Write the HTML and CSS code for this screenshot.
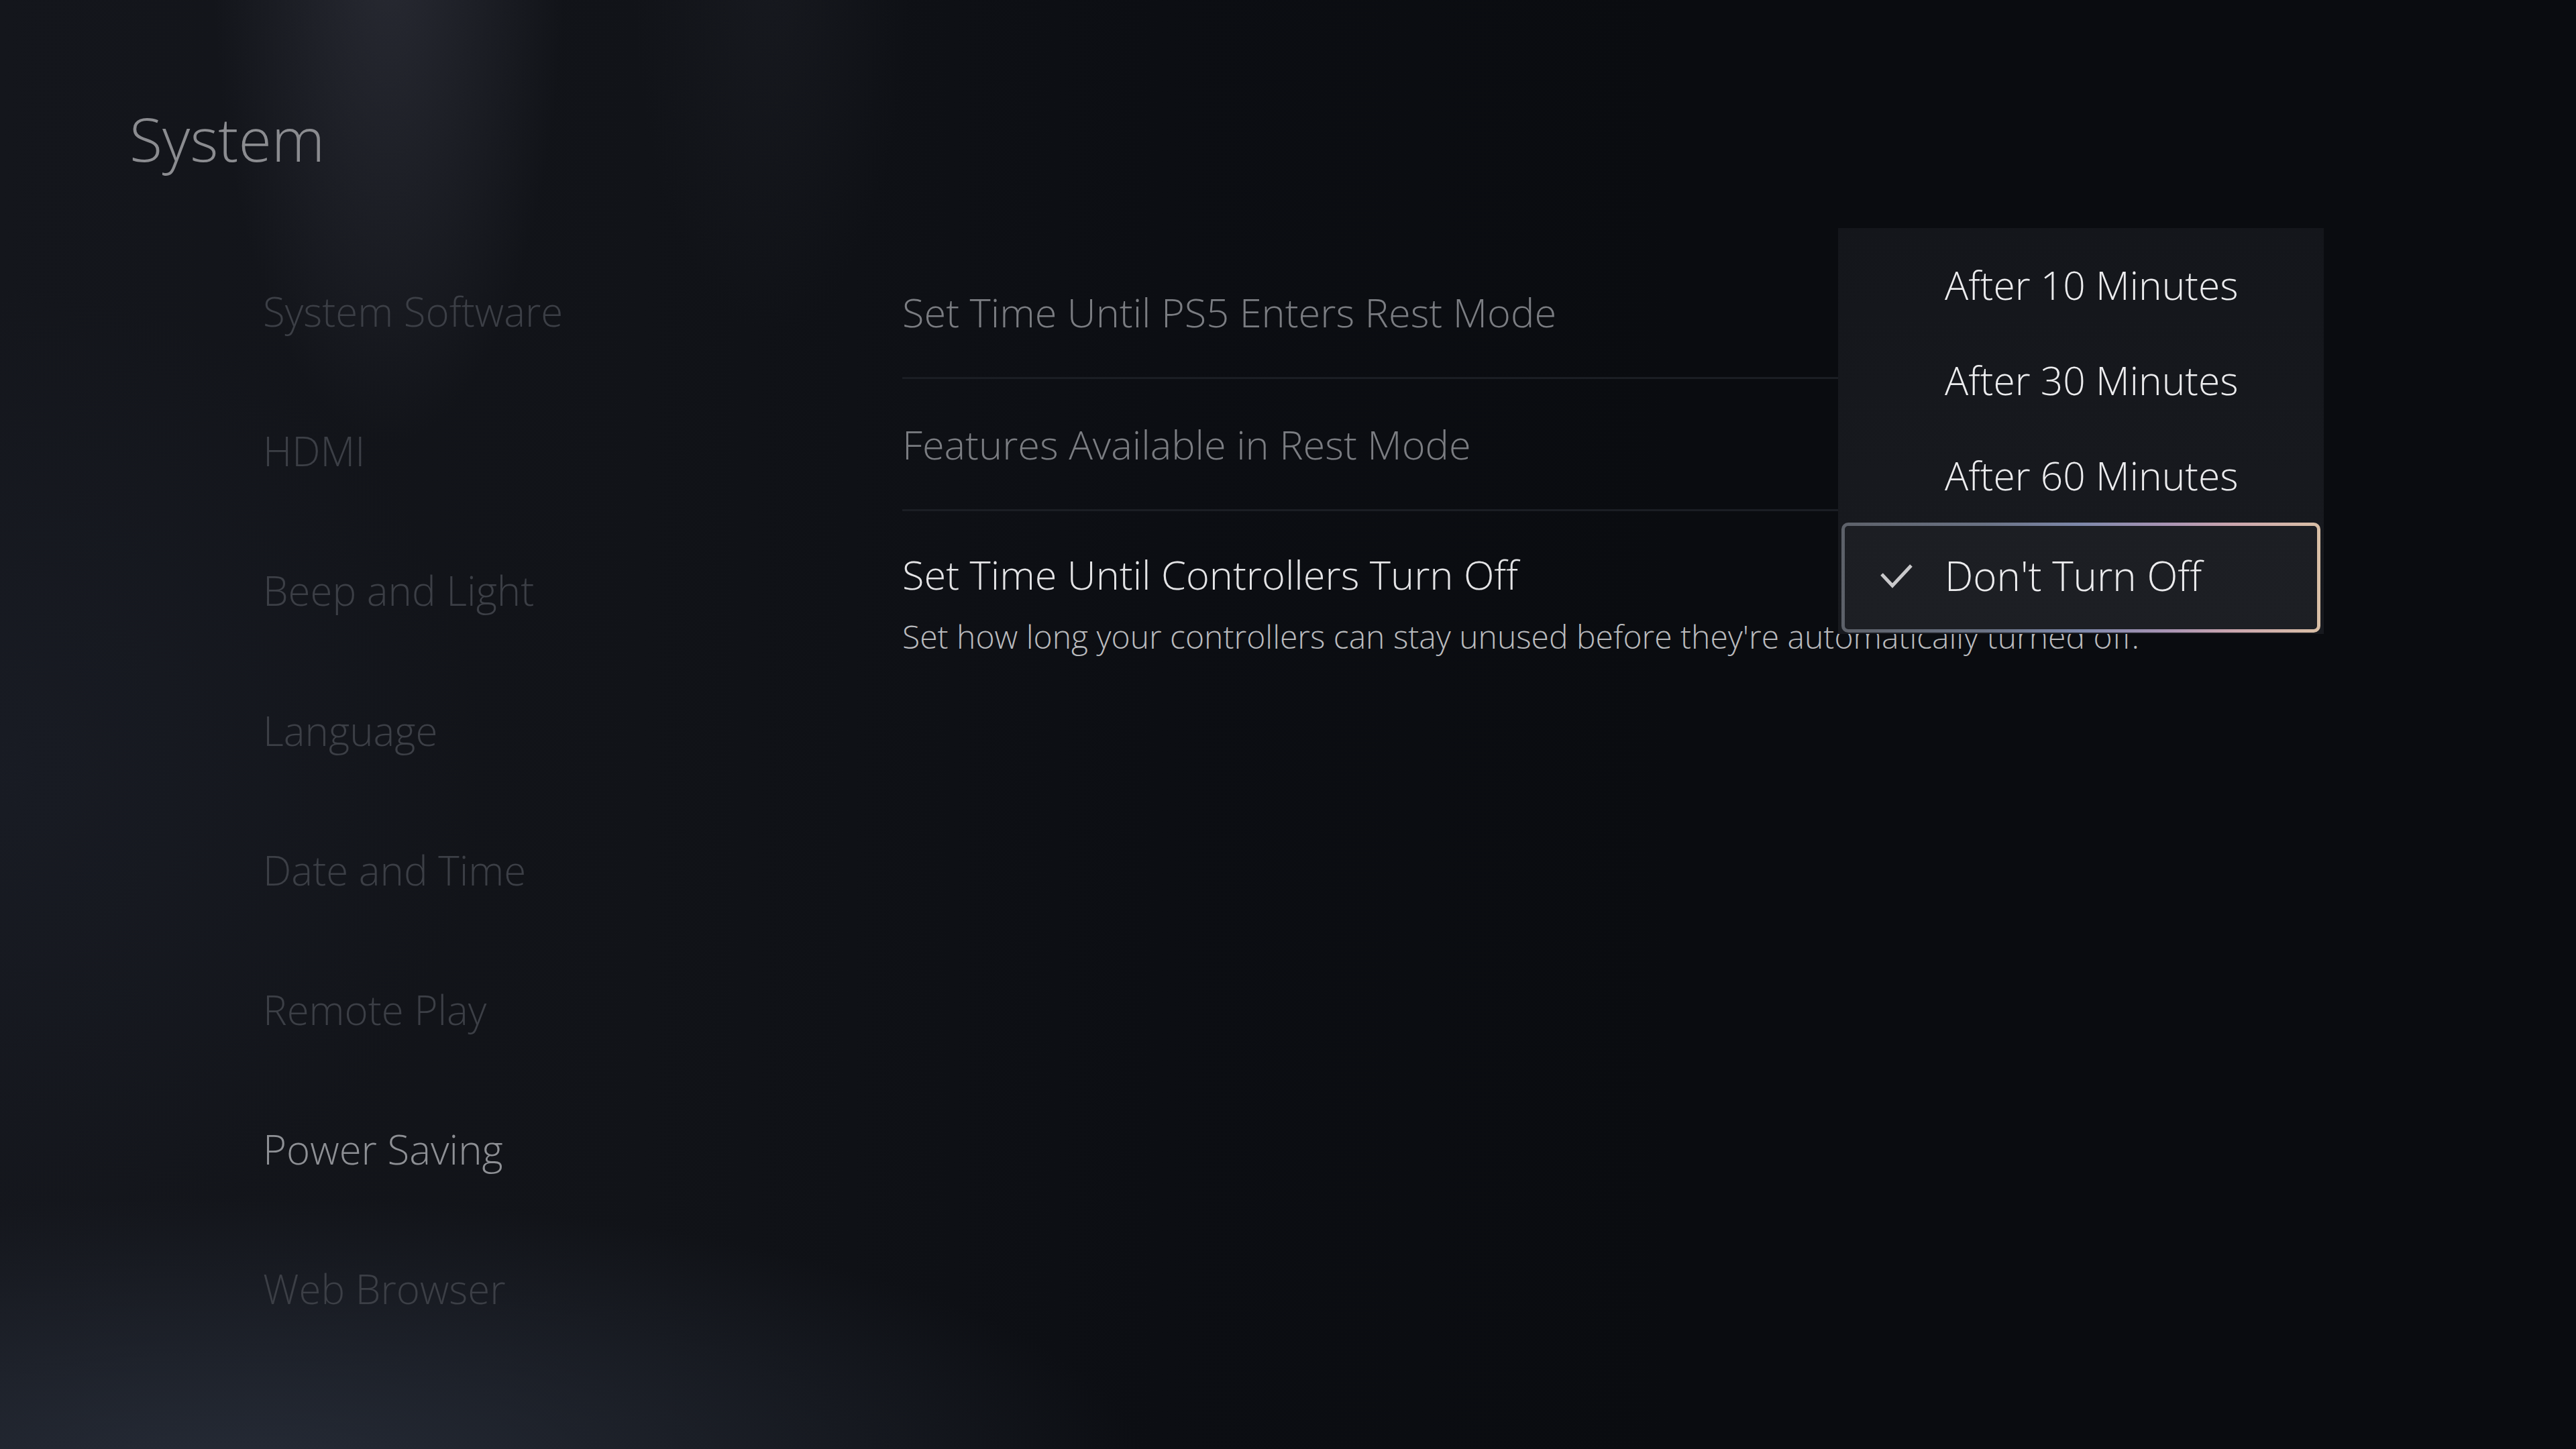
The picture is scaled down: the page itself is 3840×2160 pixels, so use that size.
FILE: index.html
```html
<!DOCTYPE html>
<html lang="en">
<head>
<meta charset="utf-8">
<title>System</title>
<link rel="stylesheet" href="styles.css">
</head>
<body>
<div class="screen">
  <header class="header">
    <h1 class="title">System</h1>
  </header>
  <div class="body">
    <nav class="sidebar">
      <div class="nav-item">System Software</div>
      <div class="nav-item">HDMI</div>
      <div class="nav-item">Beep and Light</div>
      <div class="nav-item">Language</div>
      <div class="nav-item">Date and Time</div>
      <div class="nav-item">Remote Play</div>
      <div class="nav-item nav-item-current">Power Saving</div>
      <div class="nav-item">Web Browser</div>
    </nav>
    <section class="content">
      <div class="row row-divided">
        <div class="row-title">Set Time Until PS5 Enters Rest Mode</div>
      </div>
      <div class="row row-divided">
        <div class="row-title">Features Available in Rest Mode</div>
      </div>
      <div class="row-active">
        <div class="active-title">Set Time Until Controllers Turn Off</div>
        <div class="active-desc">Set how long your controllers can stay unused before they're automatically turned off.</div>
      </div>
    </section>
  </div>
  <div class="dropdown">
    <div class="option"><span class="check-slot"></span><span class="option-label">After 10 Minutes</span></div>
    <div class="option"><span class="check-slot"></span><span class="option-label">After 30 Minutes</span></div>
    <div class="option"><span class="check-slot"></span><span class="option-label">After 60 Minutes</span></div>
    <div class="option option-selected">
      <span class="check-slot">
        <svg class="check" viewBox="-4 -4 52 38" width="52" height="38"><polyline points="0,13 16,30 44,0" fill="none" stroke="#c9c9cb" stroke-width="5" stroke-linecap="butt" stroke-linejoin="miter"/></svg>
      </span>
      <span class="option-label option-label-selected">Don't Turn Off</span>
    </div>
  </div>
</div>
</body>
</html>
```

FILE: styles.css
```css
* { box-sizing: border-box; }

html, body {
  margin: 0;
  padding: 0;
  background: #0a0c10;
}

.screen {
  position: relative;
  width: 3840px;
  height: 2160px;
  overflow: hidden;
  font-family: "Open Sans", "Noto Sans", "Liberation Sans", sans-serif;
  font-weight: 300;
  background:
    radial-gradient(ellipse 330px 950px at 580px -100px, rgba(62, 64, 76, 0.5), rgba(62, 64, 76, 0) 80%),
    radial-gradient(ellipse 260px 700px at 1150px -60px, rgba(40, 42, 50, 0.3), rgba(40, 42, 50, 0) 80%),
    radial-gradient(ellipse 1700px 520px at 350px 2200px, rgba(40, 46, 58, 0.9), rgba(40, 46, 58, 0) 80%),
    radial-gradient(ellipse 900px 900px at 0px 1150px, rgba(28, 32, 42, 0.55), rgba(28, 32, 42, 0) 80%),
    linear-gradient(90deg, #14161c 0%, #111318 25%, #0c0e13 45%, #0a0c10 65%, #0a0c10 100%);
}

.header {
  height: 360px;
  padding: 161px 0 0 193px;
}

.title {
  margin: 0;
  font-size: 90px;
  line-height: 90px;
  font-weight: 300;
  color: #8b8c90;
}

.body {
  display: flex;
}

.sidebar {
  width: 1345px;
  padding-left: 392px;
  display: flex;
  flex-direction: column;
}

.nav-item {
  height: 208.2px;
  display: flex;
  align-items: center;
  font-size: 60px;
  line-height: 1.2;
  color: #3c3f46;
  white-space: nowrap;
}

.nav-item-current {
  color: #8e9095;
}

.content {
  width: 2115px;
  padding-top: 8px;
  display: flex;
  flex-direction: column;
}

.row {
  height: 197px;
  display: flex;
  align-items: center;
  font-size: 59.5px;
  line-height: 1.2;
  color: #7b7d82;
  white-space: nowrap;
}

.row-divided {
  border-bottom: 3px solid #1b1e24;
}

.row-active {
  padding-top: 58px;
  white-space: nowrap;
}

.active-title {
  font-size: 59.5px;
  line-height: 1.2;
  color: #e4e4e6;
}

.active-desc {
  margin-top: 29px;
  font-size: 48px;
  line-height: 1.2;
  color: #babbbe;
}

.dropdown {
  position: absolute;
  left: 2740px;
  top: 340px;
  width: 724px;
  height: 605px;
  padding: 13px 5px 2px 5px;
  background: linear-gradient(180deg, #14161b 0%, #17191e 60%, #181a1f 100%);
  display: flex;
  flex-direction: column;
  z-index: 2;
}

.option {
  height: 142px;
  display: flex;
  align-items: center;
  padding-left: 60px;
  font-size: 58.7px;
  line-height: 1.2;
  color: #ececee;
  white-space: nowrap;
}

.check-slot {
  width: 52px;
  height: 38px;
  margin-right: 46px;
  display: flex;
  align-items: center;
  margin-left: -4px;
}

.check {
  display: block;
}

.option-selected {
  height: 164px;
  padding-left: 55px;
  padding-bottom: 6px;
  border: 5px solid transparent;
  border-radius: 10px;
  background:
    linear-gradient(180deg, #1c1e23, #1d1f24) padding-box,
    linear-gradient(90deg, #5d6169 0%, #6a7284 30%, #7e88aa 50%, #a994b4 68%, #cba6ae 82%, #d9bfa6 100%) border-box;
}

.option-label-selected {
  font-size: 60px;
}
```
